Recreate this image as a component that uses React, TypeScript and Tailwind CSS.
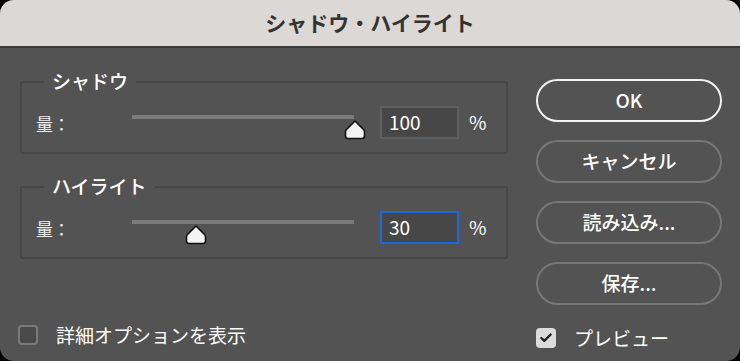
import { Check } from 'lucide-react'

const FONT = { fontFamily: '"Noto Sans CJK JP", "Noto Sans", sans-serif' }

function Thumb({ left }: { left: number }) {
  return (
    <svg
      className="absolute"
      style={{ left: left - 11, top: 12 }}
      width="22"
      height="21"
      viewBox="0 0 22 21"
    >
      <path
        d="M11 2 L19.5 10.5 Q20.5 11.5 20.5 13 L20.5 17 Q20.5 19.5 18 19.5 L4 19.5 Q1.5 19.5 1.5 17 L1.5 13 Q1.5 11.5 2.5 10.5 Z"
        fill="#f4f4f4"
        stroke="#111"
        strokeWidth="1.6"
        strokeLinejoin="round"
      />
    </svg>
  )
}

function Group({
  title,
  value,
  thumb,
  focused
}: {
  title: string
  value: string
  thumb: number
  focused?: boolean
}) {
  return (
    <div className="relative ml-[20px] w-[488px] h-[73px] border-2 border-[#474747] rounded-[3px]">
      <span className="absolute -top-[16px] left-[22px] bg-[#535353] px-2 text-[19px] font-medium leading-[28px] text-white">
        {title}
      </span>
      <div className="flex items-center pt-[22px] pl-[14px]">
        <span className="w-[96px] text-[17px] leading-[32px] text-[#ececec] pt-[3px]">量：</span>
        <div className="relative w-[222px] h-[32px]">
          <div className="absolute top-[8px] left-0 w-full h-[4px] bg-[#7b7b7b]" />
          <Thumb left={thumb} />
        </div>
        <div
          className={`ml-[26px] w-[79px] h-[33px] flex items-center pl-[7px] text-[19px] text-white bg-[#474747] ${
            focused ? 'border-[2.5px] border-[#1d6ad6]' : 'border-2 border-[#5f5f5f]'
          }`}
        >
          {value}
        </div>
        <span className="ml-[10px] text-[19px] text-white">%</span>
      </div>
    </div>
  )
}

function Btn({ label, primary }: { label: string; primary?: boolean }) {
  return (
    <button
      className={`w-[186px] h-[43px] rounded-full text-[19px] font-medium text-white bg-[#535353] ${
        primary ? 'border-2 border-[#f2f2f2]' : 'border-2 border-[#777777]'
      }`}
    >
      {label}
    </button>
  )
}

export default function App() {
  return (
    <div className="w-[740px] h-[361px] bg-black" style={FONT}>
      <div className="w-full h-full rounded-[14px] overflow-hidden bg-[#535353] flex flex-col">
        <div className="h-[46px] bg-[#dcd8d6] flex items-center justify-center text-[21px] font-bold text-[#333]">
          シャドウ・ハイライト
        </div>
        <div className="h-[2px] bg-[#3a3a3a]" />
        <div className="flex flex-1">
          <div className="w-[536px] flex flex-col">
            <div className="mt-[33px]">
              <Group title="シャドウ" value="100" thumb={223} />
            </div>
            <div className="mt-[32px]">
              <Group title="ハイライト" value="30" thumb={64} focused />
            </div>
            <div className="mt-[62px] ml-[18px] flex items-center">
              <div className="w-[20px] h-[20px] rounded-[4px] border-2 border-[#7a7a7a] bg-[#4a4a4a]" />
              <span className="ml-[18px] text-[19px] text-white">詳細オプションを表示</span>
            </div>
          </div>
          <div className="flex flex-col pt-[31px]">
            <div className="flex flex-col gap-[18px]">
              <Btn label="OK" primary />
              <Btn label="キャンセル" />
              <Btn label="読み込み..." />
              <Btn label="保存..." />
            </div>
            <div className="mt-[19px] flex items-center">
              <div className="w-[20px] h-[20px] rounded-[4px] bg-[#dcdcdc] flex items-center justify-center">
                <Check className="w-[14px] h-[14px] text-[#222]" strokeWidth={4} />
              </div>
              <span className="ml-[18px] text-[19px] text-white">プレビュー</span>
            </div>
          </div>
        </div>
      </div>
    </div>
  )
}
